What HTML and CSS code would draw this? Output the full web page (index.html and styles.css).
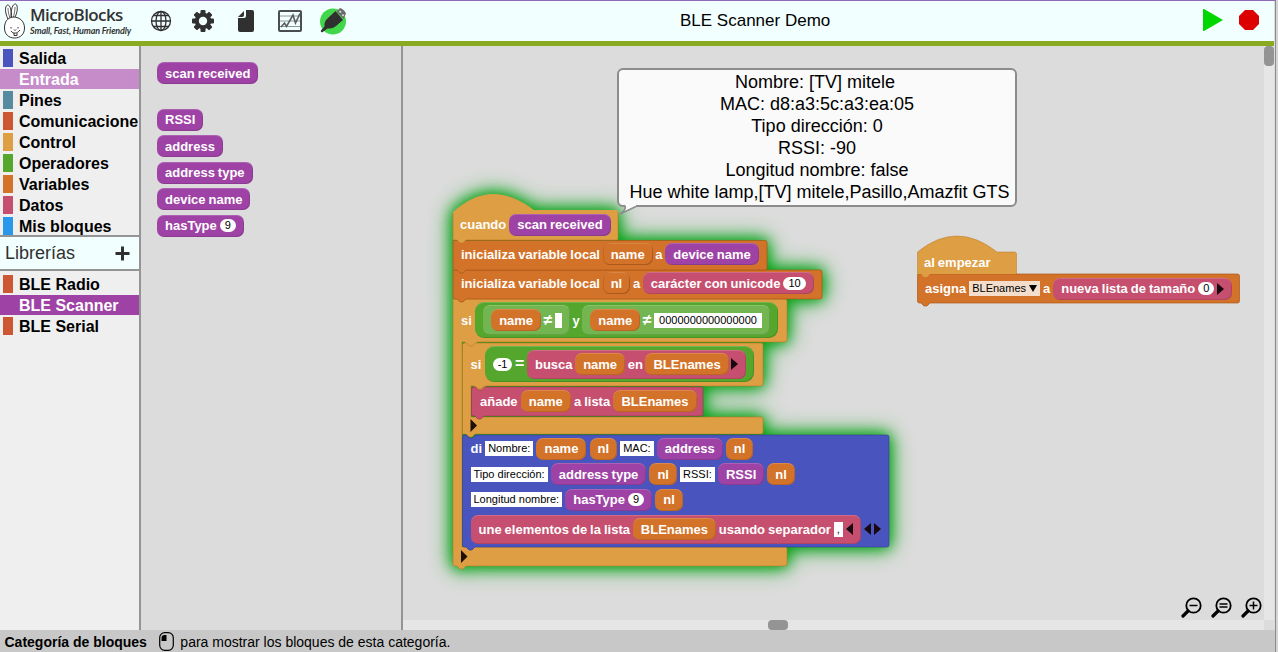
FILE: index.html
```html
<!DOCTYPE html>
<html lang="es">
<head>
<meta charset="utf-8">
<title>MicroBlocks</title>
<link rel="stylesheet" href="styles.css">
</head>
<body>
<div class="window">
  <header class="topbar">
    <svg class="rabbit" width="26" height="38" viewBox="0 0 26 38" fill="#fff" stroke="#333" stroke-width="1">
      <path d="M5 17C1.500 10 2 4 4.500 3c3 0 4 6 4 13M8 15c0-8 1.500-13 4.500-13 3 1 2 9-1 14"/>
      <path d="M5 6c0 4 1 7 2 10M12 5c0 4-1 8-2 11" fill="none" stroke-width=".7"/>
      <path d="M10 15C4 16 1.500 20 1.500 26c0 6 4 10 10 10s10-4 10-10c0-6-4-11-11.500-11z"/>
      <path d="M8 25v1.500M15 25v1.500M11 27.500l1 1 1-1M8 29c2 3 6 3 9-1M11 31v2.500h3v-2.500" fill="none"/>
    </svg>
    <div class="brand"><div class="brand-name">MicroBlocks</div><div class="brand-tag">Small, Fast, Human Friendly</div></div>
    <nav class="tools">
      <svg width="22" height="22" viewBox="0 0 22 22" fill="none" stroke="#303030" stroke-width="1.300"><circle cx="11" cy="11" r="9.500"/><ellipse cx="11" cy="11" rx="5" ry="9.500"/><path d="M11 1.500v19M1.500 11h19M3.500 5.500h15M3.500 16.500h15"/></svg>
      <svg width="24" height="24" viewBox="0 0 24 24"><g fill="#303030"><rect x="9.500" y="1" width="5" height="22" rx="1"/><rect x="9.500" y="1" width="5" height="22" rx="1" transform="rotate(45 12 12)"/><rect x="9.500" y="1" width="5" height="22" rx="1" transform="rotate(90 12 12)"/><rect x="9.500" y="1" width="5" height="22" rx="1" transform="rotate(135 12 12)"/><circle cx="12" cy="12" r="8.300"/></g><circle cx="12" cy="12" r="4.200" fill="#f2ffff"/></svg>
      <svg width="18" height="24" viewBox="0 0 18 24" fill="#303030"><path d="M9 1h6q2 0 2 2v18q0 2-2 2H3q-2 0-2-2V9h6q2 0 2-2z"/><path d="M7 2v4q0 2-2 2H1z"/></svg>
      <svg width="26" height="24" viewBox="0 0 26 24" fill="none" stroke="#4a4e50"><rect x="2" y="2" width="22" height="20" rx="1" stroke-width="2"/><path d="M3 7h20M3 12h20M3 17.500h20" stroke="#909698" stroke-width="1"/><path d="M4 18l3.500-4 2 3.500 6.500-11.500 2.500 8 4.500-9.500" stroke="#5a5e60" stroke-width="1.600"/></svg>
      <svg width="28" height="28" viewBox="0 0 28 28"><circle cx="14" cy="14.500" r="13" fill="#42d74a"/><path d="M1.500 24l4-4.500c-.5-4 1-6.500 4-9l7-6.500 7.500 9-7 6c-3 2.500-6 2.500-8.500 2.500l-5.500 4z" fill="#303030"/><path d="M17.500 4.500l3.500-3.500q4 1 6 5.500l-2.500 5.500z" fill="#6c6c6c"/><path d="M20.500 4l1.500 1.500M23.500 7.500l1 1.500" stroke="#ddd" stroke-width="1.700"/></svg>
    </nav>
    <h1 class="project">BLE Scanner Demo</h1>
    <div class="run">
      <svg width="20" height="22" viewBox="0 0 20 22"><path d="M0 0h1l19 11L1 22H0z" fill="#00d700"/></svg>
      <svg width="20" height="20" viewBox="0 0 20 20"><path d="M6 0h8l6 6v8l-6 6H6l-6-6V6z" fill="#dc0000"/></svg>
    </div>
  </header>

  <main class="work">
    <aside class="sidebar">
      <ul class="cats main-cats">
        <li><i class="c-out"></i>Salida</li>
        <li class="sel-light"><i></i>Entrada</li>
        <li><i class="c-pins"></i>Pines</li>
        <li><i class="c-com"></i>Comunicacione</li>
        <li><i class="c-ctl"></i>Control</li>
        <li><i class="c-op"></i>Operadores</li>
        <li><i class="c-var"></i>Variables</li>
        <li><i class="c-data"></i>Datos</li>
        <li><i class="c-my"></i>Mis bloques</li>
      </ul>
      <div class="libhead"><span>Librerías</span><svg width="15" height="15" viewBox="0 0 15 15"><path d="M7.500 .5v14M.5 7.500h14" stroke="#303030" stroke-width="3"/></svg></div>
      <ul class="cats lib-cats">
        <li><i class="c-com"></i>BLE Radio</li>
        <li class="sel-dark"><i></i>BLE Scanner</li>
        <li><i class="c-com"></i>BLE Serial</li>
      </ul>
    </aside>

    <section class="palette">
      <span class="pill in first">scan received</span>
      <span class="pill in">RSSI</span>
      <span class="pill in">address</span>
      <span class="pill in">address type</span>
      <span class="pill in">device name</span>
      <span class="pill in">hasType <b class="num">9</b></span>
    </section>

    <section class="canvas">
      <div class="script main-script">
        <svg class="shape glow" width="440" height="378" viewBox="0 0 440 378" stroke-width="1">
          <path d="M0 356V19Q20 1 40 1T81 17H163q2 0 2 2V47H0z" fill="#de9e43" stroke="none"/>
          <path d="M0 106H332q2 0 2 2V147q0 2-2 2H9V354H332q2 0 2 2v15q0 2-2 2H13l-3 3H7l-3-3H2q-2 0-2-2z" fill="#de9e43" stroke="#b87a28" stroke-opacity=".55"/>
          <path d="M12 148h12v6H12zM21 188h12v10H21z" fill="#de9e43" stroke="none"/>
          <path d="M0 77H367q2 0 2 2v25q0 2-2 2H13l-3 3H7l-3-3H2q-2 0-2-2z" fill="#d37329" stroke="#a65316" stroke-opacity=".65"/>
          <path d="M0 47.500H312q2 0 2 2V75q0 2-2 2H13l-3 3H7l-3-3H2q-2 0-2-2z" fill="#d37329" stroke="#a65316" stroke-opacity=".65"/>
          <path d="M0 20V45q0 2 2 2h2l3 3h3l3-3H163q2 0 2-2V19" fill="#de9e43" stroke="#b87a28" stroke-opacity=".6"/>
          <path d="M9.500 152q0-2 2-2h2l3 3h3l3-3H308q2 0 2 2V191q0 2-2 2H31l-3 3h-3l-3-3H18V224H308q2 0 2 2v13q0 2-2 2H22l-3 3h-3l-3-3H9.500z" fill="#de9e43" stroke="#b87a28" stroke-opacity=".6"/>
          <path d="M9.500 244q0-2 2-2h2l3 3h3l3-3H434q2 0 2 2V352q0 2-2 2H22l-3 3h-3l-3-3h-1.500q-2 0-2-2z" fill="#4954bf" stroke="#333c96" stroke-opacity=".6"/>
          <path d="M18.500 196q0-2 2-2h2l3 3h3l3-3H248q2 0 2 2V221q0 2-2 2H31l-3 3h-3l-3-3h-1.500q-2 0-2-2z" fill="#c64f6f" stroke="#963650" stroke-opacity=".6"/>
          <path d="M17.500 226l6.500 6.500-6.500 6.500zM8 357l6.500 6.500L8 370z" fill="#1c1008"/>
        </svg>
        <div class="rows">
          <div class="row hat"><span>cuando</span><span class="pill in">scan received</span></div>
          <div class="row r1"><span>inicializa variable local</span><span class="pill var flat">name</span><span>a</span><span class="pill in">device name</span></div>
          <div class="row r2"><span>inicializa variable local</span><span class="pill var flat">nl</span><span>a</span><span class="pill data">carácter con unicode <b class="num">10</b></span></div>
          <div class="row r3"><span>si</span><div class="pill op outer"><div class="pill op2"><span class="pill var">name</span><span class="sym">≠</span><b class="str empty"></b></div><span>y</span><div class="pill op2"><span class="pill var">name</span><span class="sym">≠</span><b class="str zeros">0000000000000000</b></div></div></div>
          <div class="row r4"><span>si</span><div class="pill op outer"><b class="num">-1</b><span class="sym">=</span><div class="pill data mid"><span>busca</span><span class="pill var">name</span><span>en</span><span class="pill var">BLEnames</span><i class="tri"></i></div></div></div>
          <div class="row r5"><span>añade</span><span class="pill var">name</span><span>a lista</span><span class="pill var">BLEnames</span></div>
          <div class="say">
            <div class="row"><span>di</span><b class="str">Nombre:</b><span class="pill var">name</span><span class="pill var">nl</span><b class="str">MAC:</b><span class="pill in">address</span><span class="pill var">nl</span></div>
            <div class="row"><b class="str">Tipo dirección:</b><span class="pill in">address type</span><span class="pill var">nl</span><b class="str">RSSI:</b><span class="pill in">RSSI</span><span class="pill var">nl</span></div>
            <div class="row"><b class="str">Longitud nombre:</b><span class="pill in">hasType <b class="num">9</b></span><span class="pill var">nl</span></div>
            <div class="row last"><div class="pill data mid"><span>une elementos de la lista</span><span class="pill var">BLEnames</span><span>usando separador</span><b class="str comma">,</b><i class="tri left"></i></div><i class="tri left"></i><i class="tri"></i></div>
          </div>
        </div>
      </div>

      <div class="script start-script">
        <svg class="shape" width="325" height="72" viewBox="0 0 325 72">
          <path d="M.5 40V17Q20 1 40 1T80 17H97.500q2 0 2 2V40z" fill="#de9e43" stroke="#b87a28" stroke-opacity=".5"/>
          <path d="M.5 41q0-2 2-2H320.500q2 0 2 2V66q0 2-2 2H13l-3 3H7l-3-3H2.500q-2 0-2-2z" fill="#d37329" stroke="#a65316" stroke-opacity=".65"/>
          <path d="M1 36v3h3l3 3h3l3-3H99v-3z" fill="#de9e43"/>
        </svg>
        <div class="rows">
          <div class="row start-hat"><span>al empezar</span></div>
          <div class="row start-set"><span>asigna</span><b class="str menu">BLEnames<i class="down"></i></b><span>a</span><span class="pill data">nueva lista de tamaño <b class="num">0</b><i class="tri"></i></span></div>
        </div>
      </div>

      <div class="bubble">
        <div class="line-first">Nombre: [TV] mitele</div><div>MAC: d8:a3:5c:a3:ea:05</div><div>Tipo dirección: 0</div><div>RSSI: -90</div><div>Longitud nombre: false</div><div class="line-last">Hue white lamp,[TV] mitele,Pasillo,Amazfit GTS</div>
        <svg class="tail" width="22" height="12" viewBox="0 0 22 12"><path d="M6 -1L7 2Q7 5 1 9L17 2V-1z" fill="#fafafa"/><path d="M5 1Q9 3 1 9L17 1.500" fill="none" stroke="#8c8c8c" stroke-width="1.600"/></svg>
      </div>

      <div class="zoom">
        <svg width="21" height="21" viewBox="0 0 21 21" fill="none" stroke="#000"><circle cx="12.500" cy="8.500" r="7.200" stroke-width="1.800"/><path d="M7 14l-5 5" stroke-width="3.200" stroke-linecap="round"/><path d="M8.500 8.500h8" stroke-width="1.500"/></svg>
        <svg width="21" height="21" viewBox="0 0 21 21" fill="none" stroke="#000"><circle cx="12.500" cy="8.500" r="7.200" stroke-width="1.800"/><path d="M7 14l-5 5" stroke-width="3.200" stroke-linecap="round"/><path d="M8.500 7h8M8.500 10h8" stroke-width="1.500"/></svg>
        <svg width="21" height="21" viewBox="0 0 21 21" fill="none" stroke="#000"><circle cx="12.500" cy="8.500" r="7.200" stroke-width="1.800"/><path d="M7 14l-5 5" stroke-width="3.200" stroke-linecap="round"/><path d="M8.500 8.500h8M12.500 4.500v8" stroke-width="1.500"/></svg>
      </div>
      <div class="vbar"><div class="vthumb"></div></div>
      <div class="hbar"><div class="hthumb"></div></div>
    </section>
  </main>

  <footer class="status"><strong>Categoría de bloques</strong>
    <svg width="15" height="19" viewBox="0 0 15 19"><rect x=".7" y=".7" width="13.600" height="17.600" rx="5" fill="none" stroke="#000" stroke-width="1.200"/><path d="M7.500 3v6H2.500V6q0-3 3-3z"/></svg>
    <span>para mostrar los bloques de esta categoría.</span></footer>
</div>
</body>
</html>
```
FILE: styles.css
```css
* { box-sizing: border-box; }
body { margin: 0; width: 1278px; height: 652px; overflow: hidden; background: #d4d4d4; font-family: "Liberation Sans", Arial, sans-serif; }
.window { width: 1276px; height: 652px; display: flex; flex-direction: column; border-top: 1px solid #9068b8; border-right: 1px solid #8c8c8c; background: #dcdcdc; }
svg { display: block; flex: none; }

.topbar { height: 45px; flex: none; display: flex; align-items: flex-start; background: #f2ffff; border-bottom: 5px solid #8aab1f; width: 1274px; }
.rabbit { margin: 1px 0 0 3px; }
.brand { width: 120px; margin: 3px 0 0 1px; color: #333; white-space: nowrap; font-family: "Open Sans", "Noto Sans", sans-serif; }
.brand-name { font-size: 17px; line-height: 22px; font-weight: 600; letter-spacing: -.6px; }
.brand-tag { font-family: Lato, sans-serif; font-size: 9px; line-height: 11px; margin-top: -1px; font-style: italic; font-weight: 700; letter-spacing: -.15px; }
.tools { display: flex; align-items: center; height: 39px; }
.tools svg:nth-child(1) { margin-right: 19px; }
.tools svg:nth-child(2) { margin-right: 22px; }
.tools svg:nth-child(3) { margin-right: 22px; }
.tools svg:nth-child(4) { margin-right: 16px; }
.project { margin: 0 0 0 333px; font-size: 17px; line-height: 39px; font-weight: 400; white-space: nowrap; flex: 1; }
.run { display: flex; gap: 16px; align-items: center; height: 38px; margin-right: 15px; }

.work { display: flex; height: 584px; flex: none; }
.sidebar { width: 141px; flex: none; background: #efefef; border-right: 2px solid #949494; }
.cats { list-style: none; margin: 0; padding: 2px 0 0; font-size: 16px; font-weight: 700; line-height: 21px; color: #000; }
.cats li { display: flex; align-items: flex-start; height: 21px; white-space: nowrap; }
.cats i { width: 10px; height: 18px; margin: 1px 6px 0 3px; flex: none; }
.main-cats { height: 189px; }
.cats .sel-light { background: #c68cc9; background-clip: content-box; padding-bottom: 1px; color: #fff; }
.cats .sel-dark { background: #9e43a5; background-clip: content-box; padding-bottom: 1px; color: #fff; }
.libhead { height: 36px; display: flex; align-items: center; justify-content: space-between; padding: 0 9px 0 5px; background: #f2ffff; border-top: 2px solid #949494; border-bottom: 2px solid #949494; font-size: 18px; color: #303030; }
.lib-cats { padding-top: 3px; }
.c-out { background: #4954bf; } .c-pins { background: #568b9f; } .c-com { background: #ce5733; }
.c-ctl { background: #de9e43; } .c-op { background: #54a62c; } .c-var { background: #d37329; }
.c-data { background: #c64f6f; } .c-my { background: #2998ea; }

.palette { width: 262px; flex: none; display: flex; flex-direction: column; align-items: flex-start; gap: 4.500px; padding: 16px 0 0 16px; border-right: 2px solid #949494; }
.palette .pill { font-size: 13px; }
.palette .first { margin-bottom: 20px; }

.pill { display: inline-flex; align-items: center; height: 22px; padding: 0 8px; border-radius: 7px; color: #fff; font-weight: 700; word-spacing: -.6px; white-space: pre; flex: none; box-shadow: inset 0 1px 0 rgba(255,255,255,.16), inset -1px -1px 0 rgba(0,0,0,.12); }
.in { background: #9e43a5; } .var { background: #d37329; } .data { background: #c64f6f; }
.op { background: #54a62c; } .op2 { background: #73b550; }
.flat { box-shadow: inset 0 1px 0 rgba(255,255,255,.12), inset -1px -1px 0 rgba(90,30,0,.3), inset 1px 0 0 rgba(90,30,0,.15); }
.num { background: #fff; color: #000; font-size: 11px; font-weight: 400; line-height: 13px; height: 13px; padding: 0 5px; border-radius: 7px; flex: none; }
.str { background: #fff; color: #000; font-size: 11px; font-weight: 400; line-height: 15px; height: 15px; padding: 0 3px; white-space: nowrap; flex: none; word-spacing: 0; }
.empty { width: 7px; } .comma { width: 9px; } .zeros { padding: 0 5px; }
.sym { font-size: 16px; line-height: 20px; }
.tri { width: 0; height: 0; flex: none; border: 6.500px solid transparent; border-left: 7px solid #180810; border-right: 0; }
.tri.left { border-left: 0; border-right: 7px solid #180810; }

.canvas { position: relative; flex: 1; }
.script { position: absolute; color: #fff; font-size: 13px; font-weight: 700; word-spacing: -.6px; }
.main-script { left: 50px; top: 147px; }
.start-script { left: 514px; top: 189px; }
.shape { position: absolute; left: 0; top: 0; overflow: visible; }
.glow { filter: drop-shadow(0 0 7px #00a010) drop-shadow(0 0 10px rgba(0,160,16,.8)); }
.rows { position: relative; }
.row { display: flex; align-items: center; gap: 3.300px; white-space: nowrap; }
.hat { height: 47px; padding: 16px 0 0 7px; gap: 3px; }
.r1 { height: 29px; padding: 0 0 1px 8px; gap: 2.700px; }
.r2 { height: 30px; padding: 0 0 2px 8px; gap: 2.700px; }
.r3 { height: 43px; padding: 0 0 1px 8px; }
.r4 { height: 44px; padding-left: 17.500px; }
.r5 { height: 30px; padding-left: 27px; gap: 3.200px; }
.outer { height: 36px; gap: 2.600px; border-radius: 9px; }
.op2 { height: 30px; gap: 2.500px; }
.mid { height: 29px; gap: 2.800px; }
.r4 .mid { gap: 2.600px; }
.say { padding: 21.600px 0 0 17.500px; display: flex; flex-direction: column; gap: 3.700px; }
.say .row { gap: 3.100px; }
.start-hat { height: 39px; padding: 15px 0 0 7px; }
.start-set { height: 29px; padding-left: 8px; gap: 3px; }
.start-set .tri { margin-left: 3px; }
.menu { background: #f4decb; display: flex; align-items: center; gap: 3px; }
.down { border: 4.500px solid transparent; border-top: 7px solid #000; border-bottom: 0; }

.bubble { position: absolute; left: 214px; top: 22px; width: 400px; height: 139px; border: 2px solid #8c8c8c; border-radius: 6px; background: #fafafa; color: #000; text-align: center; font-size: 18px; line-height: 22px; padding: 1px 0; white-space: nowrap; }
.line-first { padding-right: 4px; }
.line-last { padding-left: 5px; }
.tail { position: absolute; left: 0; bottom: -12px; }
.zoom { position: absolute; right: 13px; bottom: 12px; display: flex; gap: 9px; }
.vbar { position: absolute; right: 1px; top: 0; width: 10px; height: 574px; background: #e6e6e6; }
.vthumb { height: 20px; border-radius: 4px; background: #949494; }
.hbar { position: absolute; left: 0; bottom: 0; width: 861px; height: 10px; background: #e6e6e6; }
.hthumb { width: 20px; height: 10px; margin-left: 365px; border-radius: 4px; background: #949494; }

.status { flex: 1; display: flex; align-items: center; background: #c8c8c8; font-size: 14px; padding: 1px 0 0 4.500px; white-space: nowrap; color: #000; }
.status svg { margin: 0 6px 0 12.500px; }
```
